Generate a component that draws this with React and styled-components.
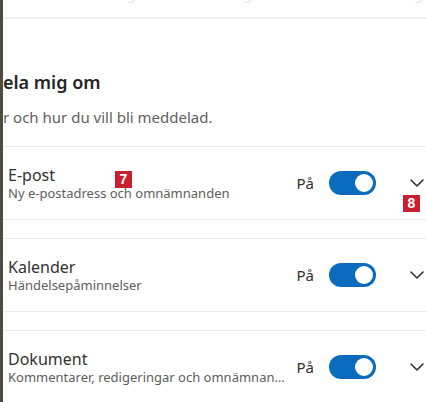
import React from 'react';
import styled, { createGlobalStyle } from 'styled-components';

const GlobalStyle = createGlobalStyle`
  html, body {
    margin: 0;
    padding: 0;
    background: #ffffff;
    overflow: hidden;
  }
  body {
    font-family: "Noto Sans", "Open Sans", Arial, sans-serif;
  }
`

const Page = styled.div`
  position: relative;
  display: flex;
  width: 426px;
  height: 402px;
  overflow: hidden;
  background: #ffffff;
`

const LeftEdge = styled.div`
  width: 3px;
  flex: none;
  background: #4e4c40;
`

const Panel = styled.div`
  flex: 1;
  display: flex;
  flex-direction: column;
  min-width: 0;
  overflow: hidden;

  & > * {
    flex: none;
  }
`

const TopStrip = styled.div`
  height: 17px;
  overflow: hidden;
  border-bottom: 2px solid #f0f0f0;
  padding-left: 7px;
`

const FadedText = styled.div`
  margin-top: -15px;
  font-size: 14px;
  line-height: 17px;
  color: #e6e6e6;
  white-space: nowrap;
`

const Heading = styled.h2`
  margin: 51px 0 0 0;
  font-size: 18px;
  line-height: 24px;
  font-weight: 600;
  color: #242424;
  white-space: nowrap;
`

const Intro = styled.p`
  margin: 13px 0 0 0;
  font-size: 15px;
  line-height: 20px;
  color: #616161;
  white-space: nowrap;
`

const List = styled.div`
  display: flex;
  flex-direction: column;
  gap: 18px;
  margin-top: 19px;
`

const Row = styled.div`
  display: flex;
  align-items: center;
  height: 72px;
  border-top: 1px solid #ececec;
  border-bottom: 1px solid #ececec;
  padding: 0 2px 0 5px;
`

const TextCol = styled.div`
  flex: 1;
  min-width: 0;
  display: flex;
  flex-direction: column;
`

const Title = styled.div`
  font-size: 16px;
  line-height: 20px;
  color: #323130;
`

const Desc = styled.div`
  font-size: 13px;
  line-height: 17px;
  color: #605e5c;
  white-space: nowrap;
  overflow: hidden;
  text-overflow: ellipsis;
`

const State = styled.span`
  font-size: 15px;
  color: #323130;
  margin: 0 15px 0 10px;
`

const Toggle = styled.div`
  width: 47px;
  height: 24px;
  border-radius: 12px;
  background: ${p => (p.on ? '#0b6bbd' : '#c8c6c4')};
  display: flex;
  align-items: center;
  justify-content: ${p => (p.on ? 'flex-end' : 'flex-start')};
  padding: 0 3px;
  box-sizing: border-box;
  flex: none;
`

const Knob = styled.div`
  width: 18px;
  height: 18px;
  border-radius: 50%;
  background: #ffffff;
`

const Chevron = styled.svg`
  width: 14px;
  height: 8px;
  margin-left: 34px;
  flex: none;
`

const Badge = styled.div`
  position: absolute;
  left: ${p => p.x}px;
  top: ${p => p.y}px;
  width: 17px;
  height: 17px;
  background: #c8202e;
  color: #ffffff;
  font-family: "Liberation Sans", Arial, sans-serif;
  font-weight: 700;
  font-size: 14px;
  line-height: 17px;
  text-align: center;
`

const items = [
  { title: 'E-post', desc: 'Ny e-postadress och omnämnanden' },
  { title: 'Kalender', desc: 'Händelsepåminnelser' },
  { title: 'Dokument', desc: 'Kommentarer, redigeringar och omnämnanden i dokument' },
]

const App = () => (
  <Page>
    <GlobalStyle />
    <LeftEdge />
    <Panel>
      <TopStrip>
        <FadedText>Hantera inställningarna för aviseringar och hur de visas för dig</FadedText>
      </TopStrip>
      <Heading>ela mig om</Heading>
      <Intro>r och hur du vill bli meddelad.</Intro>
      <List>
        {items.map(item => (
          <Row key={item.title}>
            <TextCol>
              <Title>{item.title}</Title>
              <Desc>{item.desc}</Desc>
            </TextCol>
            <State>På</State>
            <Toggle on>
              <Knob />
            </Toggle>
            <Chevron viewBox="0 0 14 8">
              <path d="M1 1 L7 7 L13 1" fill="none" stroke="#323130" strokeWidth="1.6" strokeLinecap="round" strokeLinejoin="round" />
            </Chevron>
          </Row>
        ))}
      </List>
    </Panel>
    <Badge x={115} y={171}>7</Badge>
    <Badge x={403} y={195}>8</Badge>
  </Page>
)

export default App
